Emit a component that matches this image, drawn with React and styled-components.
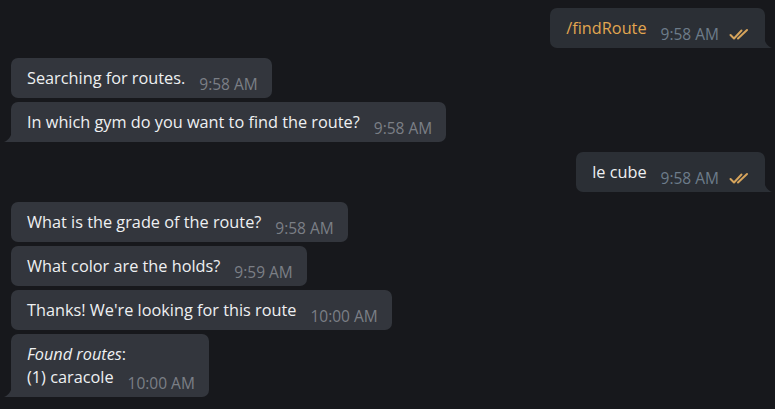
import React from "react";
import styled, { createGlobalStyle } from "styled-components";

const GlobalStyle = createGlobalStyle`
  html, body {
    margin: 0;
    padding: 0;
    background: #17181c;
  }
  body {
    font-family: "Open Sans", "Noto Sans", sans-serif;
  }
`;

const messages = [
  { id: 1, out: true, text: "/findRoute", command: true, time: "9:58 AM", tail: true },
  { id: 2, text: "Searching for routes.", time: "9:58 AM", gap: 10 },
  { id: 3, text: "In which gym do you want to find the route?", time: "9:58 AM", tail: true, gap: 4 },
  { id: 4, out: true, text: "le cube", time: "9:58 AM", tail: true, gap: 10 },
  { id: 5, text: "What is the grade of the route?", time: "9:58 AM", gap: 10 },
  { id: 6, text: "What color are the holds?", time: "9:59 AM", gap: 4 },
  { id: 7, text: "Thanks! We're looking for this route", time: "10:00 AM", gap: 4 },
  { id: 8, found: true, time: "10:00 AM", tail: true, gap: 4 },
];

const Ticks = () => (
  <svg width="22" height="13" viewBox="0 0 22 13" fill="none">
    <path d="M1.5 7 L5 10.5 L12.5 2.5" stroke="#d6a45c" strokeWidth="2" strokeLinecap="round" strokeLinejoin="round" />
    <path d="M9 10.5 L18 2" stroke="#d6a45c" strokeWidth="2" strokeLinecap="round" />
  </svg>
);

const Tail = ({ out }) =>
  out ? (
    <TailSvg $out width="8" height="14" viewBox="0 0 8 14">
      <path d="M0 0 C0 8 3 12 8 14 L0 14 Z" fill="#2b2f35" />
    </TailSvg>
  ) : (
    <TailSvg width="8" height="14" viewBox="0 0 8 14">
      <path d="M8 0 C8 8 5 12 0 14 L8 14 Z" fill="#33363d" />
    </TailSvg>
  );

const App = () => (
  <>
    <GlobalStyle />
    <Chat>
      {messages.map((m) => (
        <Row key={m.id} $out={m.out} $gap={m.gap || 0}>
          <Bubble $out={m.out} $tail={m.tail} $command={m.command}>
            {m.found ? (
              <>
                <em>Found routes</em>:
                <br />
                (1) caracole
              </>
            ) : (
              m.text
            )}
            <Meta $out={m.out}>
              {m.time}
              {m.out && <Ticks />}
            </Meta>
            {m.tail && <Tail out={m.out} />}
          </Bubble>
        </Row>
      ))}
    </Chat>
  </>
);

export default App;

const Chat = styled.div`
  display: flex;
  flex-direction: column;
  padding: 8px 10px 0 11px;
  height: 409px;
  box-sizing: border-box;
`;

const Row = styled.div`
  display: flex;
  justify-content: ${(p) => (p.$out ? "flex-end" : "flex-start")};
  margin-top: ${(p) => p.$gap}px;
`;

const Bubble = styled.div`
  position: relative;
  padding: 9px 14px 8px 16px;
  border-radius: 7px;
  font-size: 16.3px;
  line-height: 23px;
  color: ${(p) => (p.$command ? "#e2a650" : "#eef0f2")};
  background: ${(p) => (p.$out ? "#2b2f35" : "#33363d")};
  ${(p) =>
    p.$tail &&
    (p.$out ? "border-bottom-right-radius: 0;" : "border-bottom-left-radius: 0;")}
  em {
    font-style: italic;
  }
`;

const Meta = styled.span`
  position: relative;
  top: 6px;
  display: inline-flex;
  align-items: center;
  gap: 10px;
  margin-left: 14px;
  font-size: 15.5px;
  line-height: 18px;
  color: ${(p) => (p.$out ? "#6d7c8a" : "#7b7f86")};
  white-space: nowrap;
`;

const TailSvg = styled.svg`
  position: absolute;
  bottom: 0;
  ${(p) => (p.$out ? "right: -7px;" : "left: -7px;")}
`;
